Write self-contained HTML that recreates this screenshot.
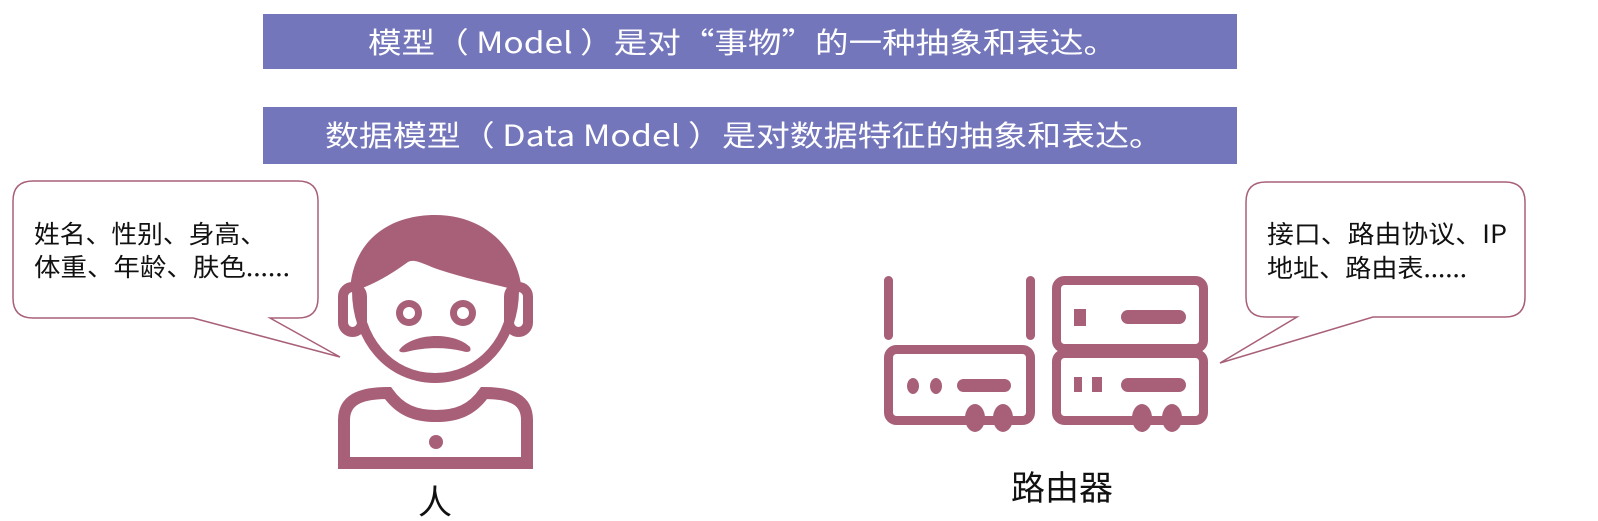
<!DOCTYPE html>
<html><head><meta charset="utf-8"><style>
html,body{margin:0;padding:0;background:#fff;width:1598px;height:521px;overflow:hidden}
svg{display:block}
text{font-family:"Noto Sans CJK SC","Liberation Sans",sans-serif}
</style></head><body>
<svg width="1598" height="521" viewBox="0 0 1598 521" xmlns="http://www.w3.org/2000/svg">
<rect x="263" y="14" width="974" height="55" fill="#7476bc"/>
<rect x="263" y="107" width="974" height="57" fill="#7476bc"/>
<text x="368" y="53" font-size="29" fill="#fff" textLength="749" lengthAdjust="spacingAndGlyphs">模型（ Model ）是对“事物”的一种抽象和表达。</text>
<text x="325" y="146" font-size="29" fill="#fff" textLength="838" lengthAdjust="spacingAndGlyphs">数据模型（ Data Model ）是对数据特征的抽象和表达。</text>

<path d="M33 181 H298 Q318 181 318 201 V298 Q318 318 298 318 H270 L340 357 L193 318 H33 Q13 318 13 298 V201 Q13 181 33 181 Z" fill="#fff" stroke="#a86079" stroke-width="1.5"/>
<text x="34" y="243" font-size="25" fill="#111" textLength="232" lengthAdjust="spacingAndGlyphs">姓名、性别、身高、</text>
<text x="34" y="276" font-size="25" fill="#111" textLength="256" lengthAdjust="spacingAndGlyphs">体重、年龄、肤色......</text>

<path d="M1266 182 H1505 Q1525 182 1525 202 V297 Q1525 317 1505 317 H1373 L1220 363 L1297 317 H1266 Q1246 317 1246 297 V202 Q1246 182 1266 182 Z" fill="#fff" stroke="#a86079" stroke-width="1.5"/>
<text x="1267" y="243" font-size="25" fill="#111" textLength="240" lengthAdjust="spacingAndGlyphs">接口、路由协议、IP</text>
<text x="1267" y="277" font-size="25" fill="#111" textLength="200" lengthAdjust="spacingAndGlyphs">地址、路由表......</text>

<g fill="#a86079">
<path d="M350 292 C352 240 390 215 435 215 C482 215 518 245 522 292 C500 285 470 280 440 270 C425 265 415 258 408 262 C390 275 370 287 350 292 Z"/>
<circle cx="409" cy="313" r="13"/><circle cx="463" cy="313" r="13"/>
<circle cx="409" cy="313" r="6" fill="#fff"/><circle cx="463" cy="313" r="6" fill="#fff"/>
<path d="M400 349 C415 332 455 332 470 347 C472 352 468 353 462 351 C445 347 425 347 406 352 C400 353 398 351 400 349 Z"/>
<circle cx="436" cy="442" r="7"/>
</g>
<g fill="none" stroke="#a86079" stroke-width="10">
<rect x="343" y="287" width="19" height="45" rx="9.5" fill="#fff"/>
<rect x="509" y="287" width="19" height="45" rx="9.5" fill="#fff"/>
<path d="M357 288 C356 340 390 378 435 378 C480 378 515 340 514 288"/>
</g>
<g fill="none" stroke="#a86079" stroke-width="12">
<path d="M344 463 V420 C344 400 360 393 388 393 C400 410 415 416 436 416 C457 416 472 410 484 393 C512 393 527 400 527 420 V463 Z"/>
</g>
<text x="435" y="514" font-size="34" fill="#111" text-anchor="middle">人</text>

<g fill="#a86079">
<rect x="884" y="276" width="9" height="64" rx="4.5"/>
<rect x="1026" y="276" width="9" height="64" rx="4.5"/>
<ellipse cx="913" cy="386" rx="6" ry="8"/><ellipse cx="936" cy="386" rx="6" ry="8"/>
<rect x="957" y="379" width="54" height="13" rx="6.5"/>
<ellipse cx="975" cy="418" rx="10" ry="14"/><ellipse cx="1003" cy="418" rx="10" ry="14"/>
<rect x="1074" y="309" width="12" height="17"/>
<rect x="1121" y="310" width="65" height="14" rx="7"/>
<rect x="1074" y="377" width="8" height="15"/><rect x="1092" y="377" width="10" height="15"/>
<rect x="1121" y="378" width="65" height="14" rx="7"/>
<ellipse cx="1142" cy="418" rx="10" ry="14"/><ellipse cx="1172" cy="418" rx="10" ry="14"/>
</g>
<g fill="none" stroke="#a86079" stroke-width="9">
<rect x="888.5" y="349.5" width="142" height="71" rx="8"/>
<rect x="1056.5" y="280.5" width="147" height="68" rx="8"/>
<rect x="1056.5" y="353.5" width="147" height="67" rx="8"/>
</g>
<text x="1062" y="500" font-size="34" fill="#111" text-anchor="middle">路由器</text>
</svg>
</body></html>
